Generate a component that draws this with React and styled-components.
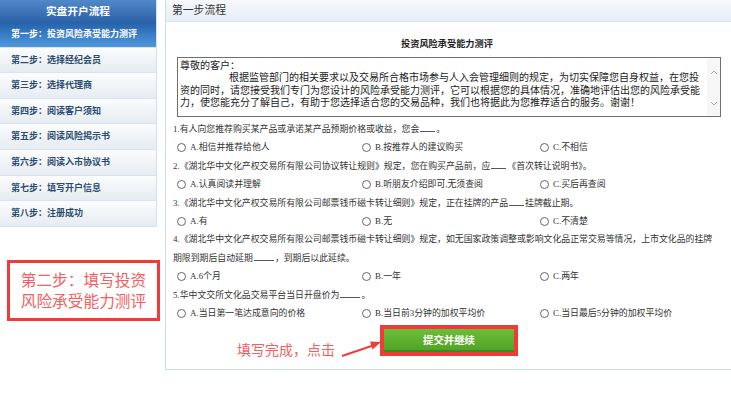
import React from "react";
import styled, { createGlobalStyle } from "styled-components";

const GlobalStyle = createGlobalStyle`
  body {
    margin: 0;
    background: #ffffff;
    font-family: "Liberation Serif", "Noto Sans CJK SC", serif;
    color: #333;
  }
`;

const Page = styled.div`
  display: flex;
  align-items: flex-start;
  gap: 4px;
  width: 731px;
  overflow: hidden;
`;

const SideColumn = styled.div`
  flex: 0 0 161px;
  display: flex;
  flex-direction: column;
`;

const Menu = styled.div`
  width: 157px;
  border-right: 1px solid #d3e1ee;
  box-sizing: border-box;
`;

const MenuTitle = styled.div`
  height: 22px;
  line-height: 22px;
  text-align: center;
  color: #fff;
  font-size: 10.7px;
  font-weight: bold;
  background: linear-gradient(#5089c9, #2c62a8);
`;

const MenuItem = styled.div`
  height: 24.6px;
  line-height: 24.6px;
  padding-left: 11px;
  font-size: 9px;
  font-weight: bold;
  border-bottom: 1px solid #d8e3ee;
  color: ${(p) => (p.active ? "#ffffff" : "#2b4c6f")};
  background: ${(p) =>
    p.active
      ? "linear-gradient(#2461a9, #4f98de)"
      : "linear-gradient(#fbfcfd, #e6ecf2)"};
`;

const RedNote = styled.div`
  margin: 33px 0 0 7px;
  width: 153px;
  height: 61px;
  box-sizing: border-box;
  border: 3px solid #f23a3a;
  display: flex;
  flex-direction: column;
  align-items: center;
  justify-content: center;
  color: #f46060;
  font-family: "Noto Sans CJK SC", sans-serif;
  font-size: 15.7px;
  line-height: 21px;
`;

const Main = styled.div`
  flex: 1;
  min-width: 566px;
  border-left: 1px solid #cbdcec;
  border-bottom: 1px solid #cbdcec;
  padding-bottom: 13px;
`;

const MainHeader = styled.div`
  height: 21px;
  line-height: 21px;
  padding-left: 6px;
  font-size: 10.8px;
  color: #333;
  background: linear-gradient(#f6f9fc, #e7eef7);
  border-bottom: 1px solid #d6e2ee;
`;

const Content = styled.div`
  padding: 0 11px 0 7px;
`;

const Title = styled.div`
  padding-top: 16px;
  height: 12px;
  line-height: 12px;
  text-align: center;
  font-size: 9.2px;
  font-weight: bold;
  color: #222;
`;

const TextBox = styled.div`
  margin: 7px 0 0 4px;
  height: 60px;
  box-sizing: border-box;
  border: 1px solid #707070;
  display: flex;
  overflow: hidden;
`;

const TextBody = styled.div`
  flex: 1;
  padding: 1px 0 0 2px;
  font-family: "Noto Sans CJK SC", sans-serif;
  font-size: 10px;
  line-height: 12.4px;
  color: #222;
  overflow: hidden;
`;

const TextLine = styled.div`
  white-space: nowrap;
  height: 12.4px;
  padding-left: ${(p) => (p.indent ? "49px" : "0")};
`;

const ScrollBar = styled.div`
  flex: 0 0 13px;
  background: #f7f7f7;
  display: flex;
  flex-direction: column;
  align-items: center;
  justify-content: space-between;
  padding: 12px 0 10px;
`;

const Questions = styled.div`
  margin-top: 3px;
  font-size: 8.9px;
  line-height: 18.4px;
  color: #333;
`;

const Question = styled.div`
  white-space: nowrap;
`;

const Blank = styled.span`
  display: inline-block;
  width: ${(p) => p.w || 15}px;
  height: 9px;
  border-bottom: 1px solid #555;
  margin: 0 1px;
`;

const Options = styled.div`
  display: grid;
  grid-template-columns: 185px 178px 1fr;
  padding-left: 4px;
`;

const Option = styled.label`
  display: flex;
  align-items: center;
  gap: 4px;
`;

const Radio = styled.span`
  width: 9px;
  height: 9px;
  border: 1px solid #666;
  border-radius: 50%;
  box-sizing: border-box;
  background: #fff;
`;

const ButtonRow = styled.div`
  position: relative;
  display: flex;
  justify-content: center;
  margin-top: 3px;
`;

const ButtonFrame = styled.div`
  border: 4px solid #f23a3a;
  display: flex;
`;

const SubmitButton = styled.button`
  width: 130px;
  height: 23px;
  border: none;
  border-bottom: 2px solid #3e8a1e;
  background: linear-gradient(#6cbd38, #52a428);
  color: #fff;
  font-family: "Noto Sans CJK SC", sans-serif;
  font-size: 10.4px;
  font-weight: bold;
  padding: 0;
`;

const Annotation = styled.span`
  position: absolute;
  left: 71px;
  top: 15px;
  color: #f46060;
  font-family: "Noto Sans CJK SC", sans-serif;
  font-size: 14px;
  line-height: 18px;
`;

const ArrowSvg = styled.svg`
  position: absolute;
  left: 174px;
  top: 13px;
`;

const Chevron = ({ down }) => (
  <svg width="8" height="5" viewBox="0 0 8 5">
    <path
      d={down ? "M1 1 L4 4 L7 1" : "M1 4 L4 1 L7 4"}
      fill="none"
      stroke="#a8a8a8"
      strokeWidth="1"
    />
  </svg>
);

const steps = [
  "第一步：投资风险承受能力测评",
  "第二步：选择经纪会员",
  "第三步：选择代理商",
  "第四步：阅读客户须知",
  "第五步：阅读风险揭示书",
  "第六步：阅读入市协议书",
  "第七步：填写开户信息",
  "第八步：注册成功",
];

const questions = [
  {
    text: (
      <>
        1.有人向您推荐购买某产品或承诺某产品预期价格或收益，您会<Blank />。
      </>
    ),
    options: ["A.相信并推荐给他人", "B.按推荐人的建议购买", "C.不相信"],
  },
  {
    text: (
      <>
        2.《湖北华中文化产权交易所有限公司协议转让规则》规定，您在购买产品前，应
        <Blank />《首次转让说明书》。
      </>
    ),
    options: ["A.认真阅读并理解", "B.听朋友介绍即可,无须查阅", "C.买后再查阅"],
  },
  {
    text: (
      <>
        3.《湖北华中文化产权交易所有限公司邮票钱币磁卡转让细则》规定，正在挂牌的产品
        <Blank />挂牌截止期。
      </>
    ),
    options: ["A.有", "B.无", "C.不清楚"],
  },
  {
    text: (
      <>
        4.《湖北华中文化产权交易所有限公司邮票钱币磁卡转让细则》规定，如无国家政策调整或影响文化品正常交易等情况，上市文化品的挂牌
        <br />
        期限到期后自动延期<Blank w={20} />，到期后以此延续。
      </>
    ),
    options: ["A.6个月", "B.一年", "C.两年"],
  },
  {
    text: (
      <>
        5.华中文交所文化品交易平台当日开盘价为<Blank w={20} />。
      </>
    ),
    options: [
      "A.当日第一笔达成意向的价格",
      "B.当日前3分钟的加权平均价",
      "C.当日最后5分钟的加权平均价",
    ],
  },
];

export default function App() {
  return (
    <>
      <GlobalStyle />
      <Page>
        <SideColumn>
          <Menu>
            <MenuTitle>实盘开户流程</MenuTitle>
            {steps.map((s, i) => (
              <MenuItem key={s} active={i === 0}>
                {s}
              </MenuItem>
            ))}
          </Menu>
          <RedNote>
            <span>第二步：填写投资</span>
            <span>风险承受能力测评</span>
          </RedNote>
        </SideColumn>

        <Main>
          <MainHeader>第一步流程</MainHeader>
          <Content>
            <Title>投资风险承受能力测评</Title>
            <TextBox>
              <TextBody>
                <TextLine>尊敬的客户：</TextLine>
                <TextLine indent>
                  根据监管部门的相关要求以及交易所合格市场参与人入会管理细则的规定，为切实保障您自身权益，在您投
                </TextLine>
                <TextLine>
                  资的同时，请您接受我们专门为您设计的风险承受能力测评，它可以根据您的具体情况，准确地评估出您的风险承受能
                </TextLine>
                <TextLine>
                  力，使您能充分了解自己，有助于您选择适合您的交易品种，我们也将据此为您推荐适合的服务。谢谢！
                </TextLine>
              </TextBody>
              <ScrollBar>
                <Chevron />
                <Chevron down />
              </ScrollBar>
            </TextBox>

            <Questions>
              {questions.map((q, i) => (
                <div key={i}>
                  <Question>{q.text}</Question>
                  <Options>
                    {q.options.map((o) => (
                      <Option key={o}>
                        <Radio />
                        {o}
                      </Option>
                    ))}
                  </Options>
                </div>
              ))}
            </Questions>
          </Content>

          <ButtonRow>
            <Annotation>填写完成，点击</Annotation>
            <ArrowSvg width="44" height="20" viewBox="0 0 44 20">
              <path d="M2 18 L33 7.5" stroke="#f23a3a" strokeWidth="2" />
              <polygon points="41,4 32.5,11.5 30,3.6" fill="#f23a3a" />
            </ArrowSvg>
            <ButtonFrame>
              <SubmitButton>提交并继续</SubmitButton>
            </ButtonFrame>
          </ButtonRow>
        </Main>
      </Page>
    </>
  );
}
